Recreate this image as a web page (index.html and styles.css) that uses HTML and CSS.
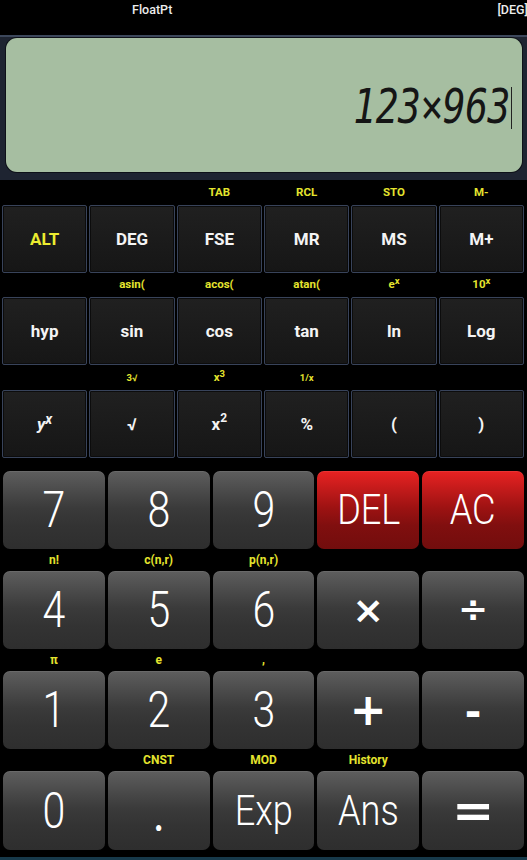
FILE: index.html
```html
<!DOCTYPE html>
<html>
<head>
<meta charset="utf-8">
<link rel="stylesheet" href="styles.css">
</head>
<body>
<div class="app">
  <div class="status">
    <span class="mode">FloatPt</span>
    <span class="angle">[DEG]</span>
  </div>
  <div class="display">
    <div class="lcd">
      <span class="expr">123×963</span><span class="cursor"></span>
    </div>
  </div>
  <div class="fn">
    <span class="lbl"></span><span class="lbl"></span><span class="lbl">TAB</span><span class="lbl">RCL</span><span class="lbl">STO</span><span class="lbl">M-</span>
    <div class="fkey alt">ALT</div><div class="fkey">DEG</div><div class="fkey">FSE</div><div class="fkey">MR</div><div class="fkey">MS</div><div class="fkey">M+</div>
    <span class="lbl"></span><span class="lbl">asin(</span><span class="lbl">acos(</span><span class="lbl">atan(</span><span class="lbl">e<sup>x</sup></span><span class="lbl">10<sup>x</sup></span>
    <div class="fkey">hyp</div><div class="fkey">sin</div><div class="fkey">cos</div><div class="fkey">tan</div><div class="fkey">ln</div><div class="fkey">Log</div>
    <span class="lbl"></span><span class="lbl"><span class="small">3√</span></span><span class="lbl">x<sup>3</sup></span><span class="lbl"><span class="small">1/x</span></span><span class="lbl"></span><span class="lbl"></span>
    <div class="fkey"><span class="pow"><i>y</i><sup>x</sup></span></div><div class="fkey">√</div><div class="fkey">x<sup>2</sup></div><div class="fkey">%</div><div class="fkey">(</div><div class="fkey">)</div>
  </div>
  <div class="pad">
    <div class="key"><span class="t">7</span></div><div class="key"><span class="t">8</span></div><div class="key"><span class="t">9</span></div><div class="key red"><span class="t w">DEL</span></div><div class="key red"><span class="t w">AC</span></div>
    <span class="plbl">n!</span><span class="plbl">c(n,r)</span><span class="plbl">p(n,r)</span><span class="plbl"></span><span class="plbl"></span>
    <div class="key"><span class="t">4</span></div><div class="key"><span class="t">5</span></div><div class="key"><span class="t">6</span></div><div class="key"><span class="op times">×</span></div><div class="key"><span class="op div">÷</span></div>
    <span class="plbl">π</span><span class="plbl">e</span><span class="plbl">,</span><span class="plbl"></span><span class="plbl"></span>
    <div class="key"><span class="t">1</span></div><div class="key"><span class="t">2</span></div><div class="key"><span class="t">3</span></div><div class="key"><span class="op plus">+</span></div><div class="key"><span class="op minus">-</span></div>
    <span class="plbl"></span><span class="plbl">CNST</span><span class="plbl">MOD</span><span class="plbl">History</span><span class="plbl"></span>
    <div class="key"><span class="t">0</span></div><div class="key"><span class="t dot">.</span></div><div class="key"><span class="t w">Exp</span></div><div class="key"><span class="t w">Ans</span></div><div class="key"><span class="op eq">=</span></div>
  </div>
  <div class="navline"></div>
</div>
</body>
</html>
```
FILE: styles.css
```css
html, body {
  margin: 0;
  padding: 0;
  background: #000;
}
body {
  font-family: Roboto, "Liberation Sans", sans-serif;
  color: #fff;
  width: 527px;
  height: 860px;
  overflow: hidden;
}
.app {
  display: flex;
  flex-direction: column;
  width: 527px;
  height: 860px;
}
.status {
  height: 35px;
  display: flex;
  justify-content: space-between;
  align-items: flex-start;
  padding-left: 132px;
  box-sizing: border-box;
  font-size: 12.5px;
  font-weight: 500;
  color: #ececec;
  line-height: 19px;
}
.angle {
  margin-right: -1px;
}
.display {
  height: 145px;
  box-sizing: border-box;
  background: #1e2431;
  border-top: 2px solid #3c475b;
  padding: 1px 5px 8px 6px;
  display: flex;
}
.lcd {
  flex: 1;
  background: #a6bea1;
  border-radius: 11px;
  box-shadow: 0 0 0 1px #0e1118;
  display: flex;
  justify-content: flex-end;
  align-items: center;
  padding-right: 10px;
  padding-top: 4px;
}
.expr {
  font-family: "DejaVu Sans Mono", monospace;
  font-size: 38px;
  font-style: italic;
  color: #151515;
  display: inline-block;
  transform: scaleY(1.25);
  letter-spacing: -0.5px;
  line-height: 40px;
}
.cursor {
  display: inline-block;
  width: 1px;
  height: 42px;
  background: #222;
  margin-left: 1px;
  margin-top: 2px;
}
.fn {
  display: grid;
  grid-template-columns: repeat(6, 1fr);
  grid-template-rows: 25px 68px 24px 68px 25px 68px;
  column-gap: 2px;
  padding: 0 3px 0 2px;
}
.lbl {
  display: flex;
  justify-content: center;
  align-items: center;
  font-size: 11.5px;
  font-weight: 700;
  color: #e4e42e;
  line-height: 1;
}
.lbl sup {
  font-size: 9.5px;
  vertical-align: 0;
  position: relative;
  top: -4px;
}
.lbl .small {
  font-size: 9.5px;
}
.fkey {
  display: flex;
  justify-content: center;
  align-items: center;
  background: linear-gradient(#202020, #161616);
  border: 1px solid #38435a;
  border-radius: 2px;
  box-shadow: inset 0 0 0 1px #0c0c0c;
  font-size: 17px;
  font-weight: 700;
  color: #f4f4f4;
}
.fkey sup {
  font-size: 12px;
  vertical-align: 0;
  position: relative;
  top: -6px;
}
.fkey.alt {
  color: #ecec30;
}
.pow i {
  font-style: italic;
}
.pow sup {
  font-style: italic;
  font-size: 14px;
  top: -6px;
}
.pad {
  margin-top: 13px;
  display: grid;
  grid-template-columns: repeat(5, 1fr);
  grid-template-rows: 78px 22px 78px 22px 78px 22px 79px;
  column-gap: 3px;
  padding: 0 3px;
}
.key {
  display: flex;
  justify-content: center;
  align-items: center;
  border-radius: 7px;
  background: linear-gradient(#5e5e5e 0%, #474747 30%, #3a3a3a 48%, #333 70%, #2e2e2e 100%);
  box-shadow: inset 0 1px 0 rgba(255,255,255,0.08);
  overflow: hidden;
}
.key.red {
  background: linear-gradient(#e82222 0%, #c01a1a 25%, #9c1212 48%, #800f0f 70%, #720d0d 100%);
}
.t {
  display: inline-block;
  font-family: Roboto, sans-serif;
  font-weight: 300;
  font-size: 50px;
  line-height: 1;
  color: #fff;
  transform: scaleX(0.82);
}
.t.w {
  font-size: 42px;
  font-weight: 300;
  transform: scaleX(0.86);
}
.t.dot {
  font-size: 40px;
  font-weight: 700;
  margin-top: 14px;
}
.op {
  display: inline-block;
  font-family: "DejaVu Sans", sans-serif;
  font-weight: 700;
  color: #fff;
  line-height: 1;
}
.op.times { font-size: 38px; }
.op.div { font-size: 36px; }
.op.plus { font-size: 44px; }
.op.minus { font-size: 40px; margin-top: 4px; }
.op.eq { font-size: 46px; transform: scaleX(1.1); }
.plbl {
  display: flex;
  justify-content: center;
  align-items: center;
  font-size: 12px;
  font-weight: 700;
  color: #e4e42e;
  line-height: 1;
}
.navline {
  margin-top: 7px;
  height: 3px;
  background: #17394a;
}
```
